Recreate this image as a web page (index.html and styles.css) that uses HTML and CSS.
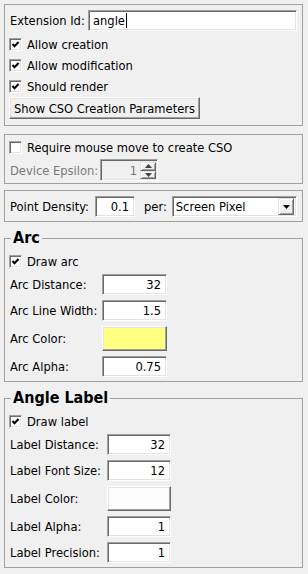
FILE: index.html
```html
<!DOCTYPE html>
<html lang="en">
<head>
  <meta charset="UTF-8">
  <meta name="viewport" content="width=device-width, initial-scale=1.0">
  <title>Angle Extension</title>
  <link rel="stylesheet" href="styles.css">
</head>
<body>
  <div class="panel panel-main">
    <div class="row">
      <span class="label id-label">Extension Id:</span>
      <div class="field grow"><span>angle</span><span class="caret"></span></div>
    </div>
    <div class="check-row first">
      <span class="check on"><svg viewBox="0 0 9 9"><polyline points="1.5,4 3.5,6.2 7.6,2"/></svg></span>
      <span>Allow creation</span>
    </div>
    <div class="check-row">
      <span class="check on"><svg viewBox="0 0 9 9"><polyline points="1.5,4 3.5,6.2 7.6,2"/></svg></span>
      <span>Allow modification</span>
    </div>
    <div class="check-row">
      <span class="check on"><svg viewBox="0 0 9 9"><polyline points="1.5,4 3.5,6.2 7.6,2"/></svg></span>
      <span>Should render</span>
    </div>
    <div class="button">Show CSO Creation Parameters</div>
  </div>

  <div class="panel panel-mouse">
    <div class="check-row">
      <span class="check"></span>
      <span>Require mouse move to create CSO</span>
    </div>
    <div class="row spin-row">
      <span class="label eps-label disabled">Device Epsilon:</span>
      <div class="spin">
        <span class="spin-value">1</span>
        <div class="spin-buttons">
          <span class="spin-btn"><svg viewBox="0 0 7 4"><polygon points="0,4 7,4 3.5,0"/></svg></span>
          <span class="spin-btn"><svg viewBox="0 0 7 4"><polygon points="0,0 7,0 3.5,4"/></svg></span>
        </div>
      </div>
    </div>
  </div>

  <div class="panel panel-density">
    <div class="row">
      <span class="label density-label">Point Density:</span>
      <div class="field num density-field">0.1</div>
      <span class="per">per:</span>
      <div class="field combo grow">
        <span>Screen Pixel</span>
        <span class="drop"><svg viewBox="0 0 7 4"><polygon points="0,0 7,0 3.5,4"/></svg></span>
      </div>
    </div>
  </div>

  <fieldset class="group">
    <legend>Arc</legend>
    <div class="check-row">
      <span class="check on"><svg viewBox="0 0 9 9"><polyline points="1.5,4 3.5,6.2 7.6,2"/></svg></span>
      <span>Draw arc</span>
    </div>
    <div class="grid arc-grid">
      <span class="label">Arc Distance:</span>
      <div class="field num">32</div>
      <span class="label">Arc Line Width:</span>
      <div class="field num">1.5</div>
      <span class="label">Arc Color:</span>
      <div class="swatch yellow"></div>
      <span class="label">Arc Alpha:</span>
      <div class="field num">0.75</div>
    </div>
  </fieldset>

  <fieldset class="group">
    <legend>Angle Label</legend>
    <div class="check-row">
      <span class="check on"><svg viewBox="0 0 9 9"><polyline points="1.5,4 3.5,6.2 7.6,2"/></svg></span>
      <span>Draw label</span>
    </div>
    <div class="grid label-grid">
      <span class="label">Label Distance:</span>
      <div class="field num">32</div>
      <span class="label">Label Font Size:</span>
      <div class="field num">12</div>
      <span class="label">Label Color:</span>
      <div class="swatch white"></div>
      <span class="label">Label Alpha:</span>
      <div class="field num">1</div>
      <span class="label">Label Precision:</span>
      <div class="field num">1</div>
    </div>
  </fieldset>
</body>
</html>
```

FILE: styles.css
```css
body {
  margin: 0;
  padding: 4px 5px 0 4px;
  background-color: #f0f0f0;
  font-family: "DejaVu Sans Condensed", "Liberation Sans", sans-serif;
  font-size: 12.8px;
  color: #000000;
}

.panel {
  border: 1px solid #a0a0a0;
  display: flex;
  flex-direction: column;
}

.panel-main {
  padding: 5px 5px 6px 4px;
}

.panel-mouse {
  margin-top: 8px;
  padding: 2px 5px 2px 4px;
}

.panel-density {
  margin-top: 6px;
  padding: 5px 5px 4px 4px;
}

.row {
  display: flex;
  align-items: center;
  height: 21px;
}

.label {
  padding-left: 1px;
  white-space: nowrap;
}

.id-label {
  width: 78px;
}

.eps-label {
  width: 90px;
}

.density-label {
  width: 85px;
}

.disabled {
  color: #787878;
}

.grow {
  flex: 1;
}

/* sunken line edit */
.field {
  height: 21px;
  box-sizing: border-box;
  background-color: #ffffff;
  border: 1px solid;
  border-color: #a0a0a0 #ffffff #ffffff #a0a0a0;
  box-shadow: inset 1px 1px 0 #696969, inset -1px -1px 0 #e3e3e3;
  display: flex;
  align-items: center;
  padding: 0 5px 0 4px;
  white-space: nowrap;
}

.field.num {
  justify-content: flex-end;
}

.caret {
  display: inline-block;
  width: 1px;
  height: 15px;
  background-color: #000000;
  margin-left: 1px;
}

.density-field {
  width: 40px;
}

.per {
  margin: 0 5px 0 9px;
}

.combo {
  justify-content: space-between;
  padding: 0 2px 0 3px;
}

.drop,
.spin-btn {
  box-sizing: border-box;
  background-color: #f0f0f0;
  border: 1px solid;
  border-color: #e3e3e3 #696969 #696969 #e3e3e3;
  box-shadow: inset 1px 1px 0 #ffffff, inset -1px -1px 0 #a0a0a0;
  display: flex;
  align-items: center;
  justify-content: center;
}

.drop {
  width: 16px;
  height: 17px;
}

.drop svg {
  width: 7px;
  height: 4px;
  fill: #000000;
}

/* spin box (disabled) */
.spin-row {
  height: 22px;
  margin-top: 1px;
}

.spin {
  width: 58px;
  height: 22px;
  box-sizing: border-box;
  background-color: #f0f0f0;
  border: 1px solid;
  border-color: #a0a0a0 #ffffff #ffffff #a0a0a0;
  box-shadow: inset 1px 1px 0 #696969, inset -1px -1px 0 #e3e3e3;
  display: flex;
  padding: 2px 1px 1px 2px;
}

.spin-value {
  flex: 1;
  text-align: right;
  padding-right: 3px;
  color: #787878;
  line-height: 18px;
}

.spin-buttons {
  width: 16px;
  display: flex;
  flex-direction: column;
}

.spin-btn {
  flex: 1;
}

.spin-btn svg {
  width: 7px;
  height: 4px;
  fill: #404040;
}

/* check boxes */
.check-row {
  display: flex;
  align-items: center;
  height: 21px;
}

.check-row.first {
  margin-top: 3px;
}

.check {
  width: 13px;
  height: 13px;
  box-sizing: border-box;
  background-color: #ffffff;
  border: 1px solid;
  border-color: #a0a0a0 #ffffff #ffffff #a0a0a0;
  box-shadow: inset 1px 1px 0 #696969, inset -1px -1px 0 #e3e3e3;
  margin-right: 5px;
  padding: 1px;
  display: flex;
}

.check svg {
  width: 9px;
  height: 9px;
  fill: none;
  stroke: #000000;
  stroke-width: 2;
}

/* raised push button */
.button {
  align-self: flex-start;
  height: 22px;
  box-sizing: border-box;
  padding: 0 4px;
  display: flex;
  align-items: center;
  background-color: #f0f0f0;
  border: 1px solid;
  border-color: #ffffff #696969 #696969 #ffffff;
  box-shadow: inset -1px -1px 0 #a0a0a0, inset 1px 1px 0 #e3e3e3;
  white-space: nowrap;
}

/* group boxes */
.group {
  margin: 7px 0 0;
  padding: 4px 5px 4px 4px;
  border: 1px solid #a0a0a0;
  min-width: 0;
}

.group legend {
  font-weight: bold;
  font-size: 16px;
  line-height: 18px;
  padding: 0 2px;
  margin-left: 2px;
}

.grid {
  display: grid;
  row-gap: 5px;
  margin-top: 2px;
  align-items: center;
}

.arc-grid {
  grid-template-columns: 93px 65px;
}

.label-grid {
  grid-template-columns: 98px 64px;
}

.swatch {
  height: 25px;
  box-sizing: border-box;
  border: 1px solid;
  border-color: #ffffff #696969 #696969 #ffffff;
  box-shadow: inset -1px -1px 0 #a0a0a0, inset 1px 1px 0 #e3e3e3;
}

.swatch.yellow {
  background-color: #ffff80;
}

.swatch.white {
  background-color: #fdfdfd;
}
```
